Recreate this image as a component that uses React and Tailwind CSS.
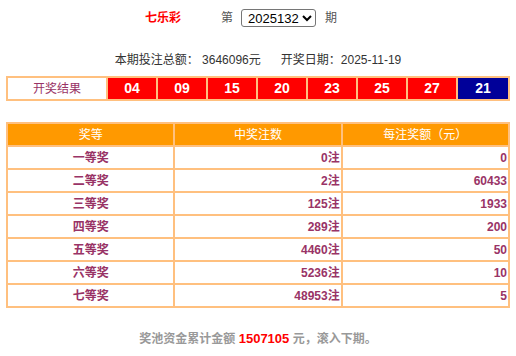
import React from 'react';

const balls = ['04', '09', '15', '20', '23', '25', '27'];

const prizes = [
  { level: '一等奖', count: '0注', amount: '0' },
  { level: '二等奖', count: '2注', amount: '60433' },
  { level: '三等奖', count: '125注', amount: '1933' },
  { level: '四等奖', count: '289注', amount: '200' },
  { level: '五等奖', count: '4460注', amount: '50' },
  { level: '六等奖', count: '5236注', amount: '10' },
  { level: '七等奖', count: '48953注', amount: '5' },
];

const font = { fontFamily: '"Liberation Sans", "Noto Sans CJK SC", sans-serif' };

const App = () => {
  return (
    <div className="w-[516px] h-[356px] bg-white overflow-hidden" style={font}>
      <div className="flex items-center justify-center h-[18px] mt-[9px] text-[12px] pr-[34px]">
        <span className="text-[#ff0000] font-bold">七乐彩</span>
        <span className="ml-[40px] text-[#555]">第</span>
        <select
          defaultValue="2025132"
          className="ml-[8px] w-[75px] h-[18px] border border-[#767676] rounded-[3px] text-[13px] text-black pl-[2px] pr-0 bg-white"
        >
          <option value="2025132">2025132</option>
          <option value="2025131">2025131</option>
        </select>
        <span className="ml-[9px] text-[#555]">期</span>
      </div>

      <div className="mt-[25px] h-[16px] leading-[16px] text-[12px] text-[#333] flex justify-center">
        <span>本期投注总额： 3646096元</span>
        <span className="ml-[20px]">开奖日期：2025-11-19</span>
      </div>

      <div className="mx-[6px] mt-[8px] w-[504px] h-[25px] bg-[#ffc07f] p-[2px] flex gap-[2px]">
        <div className="w-[98px] bg-white flex items-center justify-center text-[12px] text-[#993366]">开奖结果</div>
        {balls.map((b) => (
          <div key={b} className="w-[48px] bg-[#ff0000] flex items-center justify-center text-white font-bold text-[14px]">
            {b}
          </div>
        ))}
        <div className="flex-1 bg-[#000099] flex items-center justify-center text-white font-bold text-[14px]">21</div>
      </div>

      <table className="mx-[6px] mt-[21px] w-[504px] border-collapse border-2 border-[#ffc07f] text-[12px] table-fixed">
        <thead>
          <tr className="bg-[#ff9900] text-white h-[23px]">
            <th className="border-2 border-[#ffc07f] font-normal p-0">奖等</th>
            <th className="border-2 border-[#ffc07f] font-normal p-0">中奖注数</th>
            <th className="border-2 border-[#ffc07f] font-normal p-0">每注奖额（元）</th>
          </tr>
        </thead>
        <tbody>
          {prizes.map((p) => (
            <tr key={p.level} className="h-[23px] text-[#993366] font-bold">
              <td className="border-2 border-[#ffc07f] text-center p-0">{p.level}</td>
              <td className="border-2 border-[#ffc07f] text-right pr-[1px] py-0">{p.count}</td>
              <td className="border-2 border-[#ffc07f] text-right pr-[1px] py-0">{p.amount}</td>
            </tr>
          ))}
        </tbody>
      </table>

      <div className="mt-[23px] text-center text-[12px] text-[#999] font-bold leading-[16px]">
        奖池资金累计金额 <span className="text-[#ff0000] text-[13px]">1507105</span> 元，滚入下期。
      </div>
    </div>
  );
};

export default App;
